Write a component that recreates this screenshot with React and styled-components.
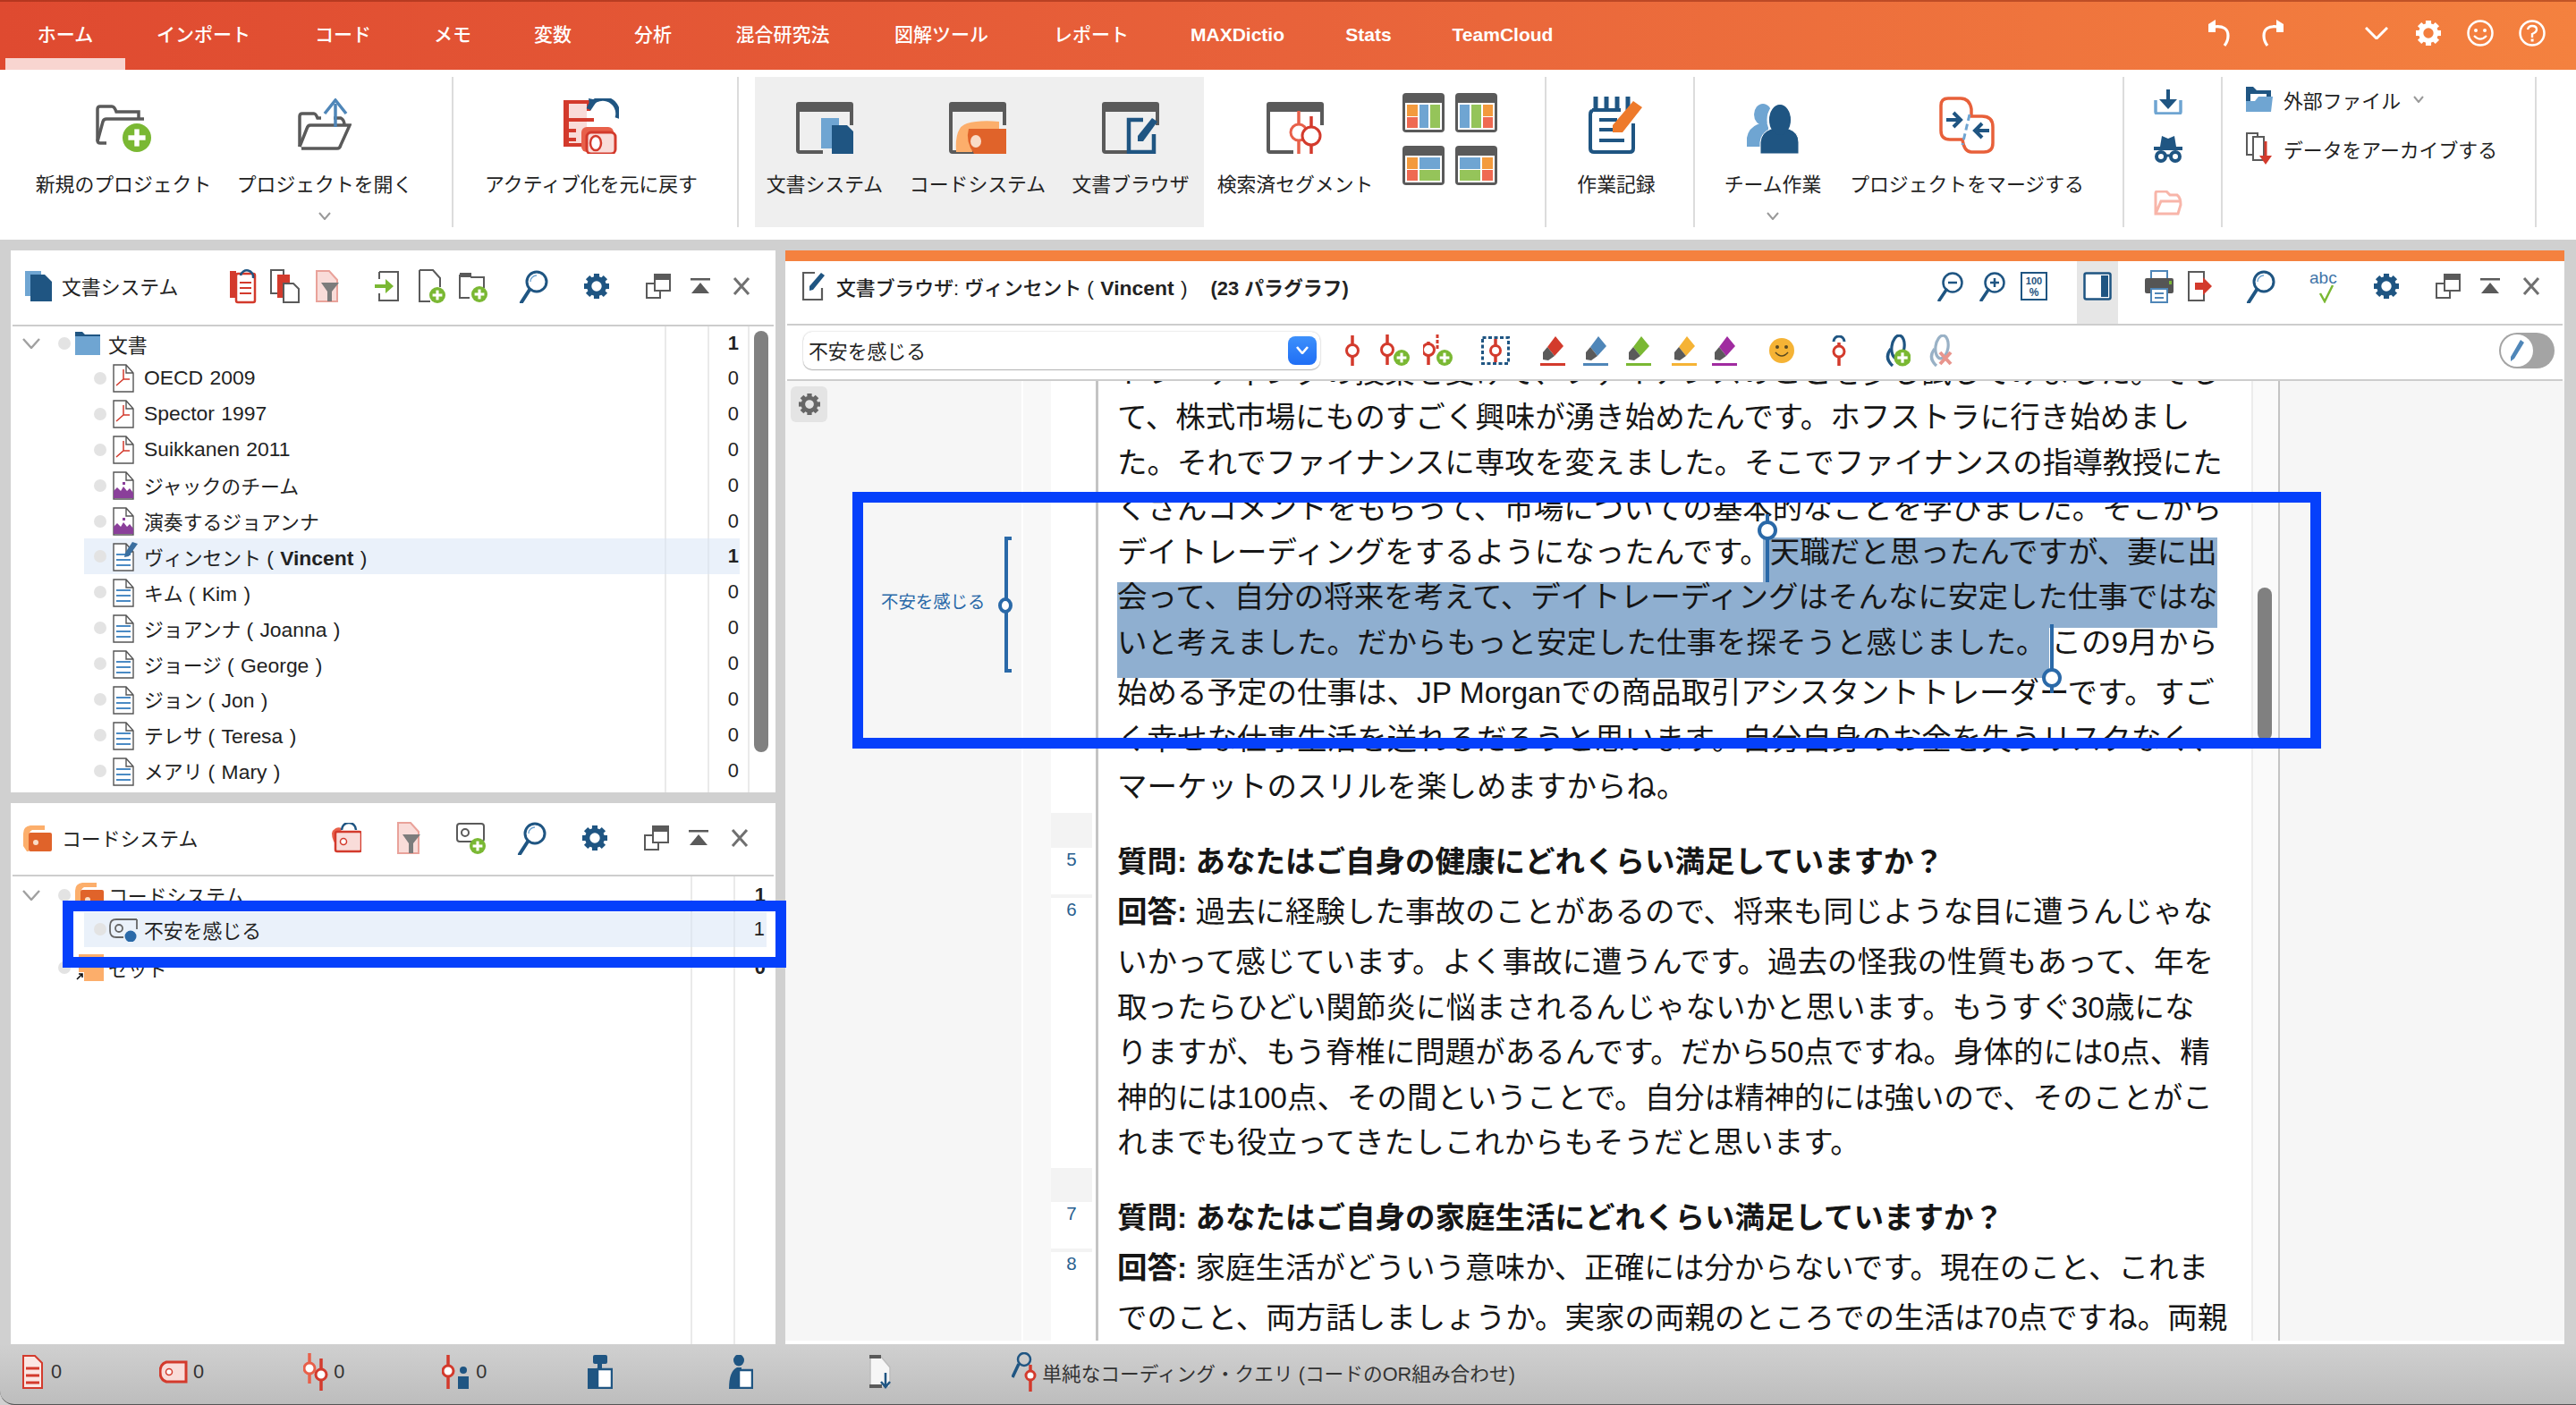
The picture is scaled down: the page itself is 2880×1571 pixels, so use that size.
import React from 'react';
import styled, { createGlobalStyle } from 'styled-components';

const G = '#5a5a5a', N = '#1f5582', LB = '#6fa5d2', R = '#d33a2c', PR = '#f9dcd9', O = '#e0632a', LO = '#fcae6b', GR = '#7ab833', MR = '#e8604a';
const FONT = '"Liberation Sans","Noto Sans CJK JP",sans-serif';

const Global = createGlobalStyle`
  html, body { margin: 0; padding: 0; background: #fff; }
  body { font-family: ${FONT}; color: #222; }
  * { box-sizing: border-box; }
`;

/* ---------- layout ---------- */
const Win = styled.div`position: relative; width: 2880px; height: 1571px; display: flex; flex-direction: column; overflow: hidden; background: #d0d0d0;`;
const TopBar = styled.div`height: 78px; display: flex; background: linear-gradient(90deg, #df4a30 0%, #e8623a 50%, #f4813f 100%); box-shadow: inset 0 2px 0 rgba(130,30,10,.45);`;
const Tabs = styled.div`display: flex; padding-left: 6px; flex: 1;`;
const Tab = styled.div`
  height: 78px; font-size: 21px; font-weight: ${p => (p.$latin ? 700 : 500)}; color: #fff; line-height: 78px; white-space: nowrap;
  box-shadow: ${p => (p.$on ? 'inset 0 -13px 0 #f8d5d0' : 'none')};
  width: ${p => p.$w}px; text-align: center; margin-right: ${p => p.$mr ?? 0}px;
`;
const BarIcons = styled.div`display: flex; align-items: flex-start; padding-top: 21px; padding-right: 33px;`;
const BarIcon = styled.div`width: 32px; height: 32px; margin-left: ${p => p.$ml}px; display: flex; justify-content: center; align-items: center;`;

const Ribbon = styled.div`height: 190px; background: #fff; display: flex; align-items: flex-start; padding: 8px 0 0 38px;`;
const Sep = styled.div`width: 2px; height: 168px; background: #dcdcdc; margin-left: ${p => p.$ml ?? 0}px; flex: none;`;
const ActiveGroup = styled.div`display: flex; width: 502px; height: 168px; background: #efefef; margin-left: 18px; flex: none;`;
const RItem = styled.div`width: ${p => p.$w}px; height: 168px; flex: none; display: flex; flex-direction: column; align-items: center;`;
const RIcon = styled.div`height: 64px; margin-top: ${p => (p.$up ? 20 : 22)}px; margin-bottom: ${p => (p.$up ? 2 : 0)}px; display: flex; align-items: flex-end; justify-content: center;`;
const RLabel = styled.div`font-size: 21.85px; line-height: 24px; margin-top: 23px; white-space: nowrap;`;
const RChev = styled.div`margin-top: 18px; line-height: 0;`;
const Grid = styled.div`display: grid; grid-template-columns: 47px 47px; gap: 15px 12px; margin: 18px 0 0 18px; width: 106px; flex: none;`;
const SmallCol = styled.div`width: 98px; height: 168px; flex: none; display: flex; flex-direction: column; align-items: center;`;
const SmallIcon = styled.div`margin-top: ${p => p.$mt}px; line-height: 0;`;
const LinkCol = styled.div`width: 349px; height: 168px; flex: none; padding: 11px 0 0 26px; display: flex; flex-direction: column; gap: 27px;`;
const LinkRow = styled.div`height: 28px; display: flex; align-items: center; font-size: 21.85px; white-space: nowrap;`;
const LinkIcon = styled.div`width: 42px; line-height: 0;`;
const LinkChev = styled.div`margin-left: 14px; line-height: 0;`;

const Main = styled.div`flex: 1; display: flex; padding: 12px 13px 0 12px; gap: 11px; min-height: 0;`;
const LeftCol = styled.div`width: 855px; display: flex; flex-direction: column; gap: 12px; flex: none;`;
const Panel = styled.div`background: #fff; display: flex; flex-direction: column; overflow: hidden; flex: ${p => p.$flex ?? 1}; min-height: 0; min-width: 0;`;
const PanelHead = styled.div`height: ${p => p.$h}px; flex: none; display: flex; align-items: center; padding-left: ${p => p.$pl}px; padding-bottom: ${p => p.$pb ?? 2}px; margin: 0 2px; border-bottom: 2px solid #cdcdcd;`;
const TitleBlock = styled.div`width: ${p => p.$w}px; flex: none; display: flex; align-items: center; font-size: 21.85px; white-space: nowrap;`;
const TitleIcon = styled.div`width: ${p => p.$w}px; flex: none; line-height: 0;`;
const Slot = styled.div`width: 46px; height: 44px; flex: none; margin-left: ${p => p.$ml ?? 0}px; display: flex; align-items: center; justify-content: center;`;

const Tree = styled.div`
  flex: 1; display: flex; min-height: 0; overflow: hidden;
  background:
    linear-gradient(#eaeaea,#eaeaea) no-repeat ${p => p.$l1}px 0 / 2px 100%,
    linear-gradient(#eaeaea,#eaeaea) no-repeat ${p => p.$l2}px 0 / 2px 100%
    ${p => (p.$l3 ? `, linear-gradient(#eaeaea,#eaeaea) no-repeat ${p.$l3}px 0 / 2px 100%` : '')};
`;
const Rows = styled.div`width: ${p => p.$w}px; flex: none; padding-top: ${p => p.$pt ?? 0}px;`;
const Row = styled.div`
  height: ${p => p.$h ?? 39.9}px; display: flex; align-items: center; font-size: 21.85px; white-space: nowrap;
  margin-left: ${p => (p.$root ? 0 : 82)}px; margin-top: ${p => p.$mt ?? 0}px;
  padding-left: ${p => (p.$root ? 13 : 11)}px;
  background: ${p => (p.$sel ? 'rgba(214,228,246,.5)' : 'transparent')};
`;
const Chev = styled.div`width: 20px; line-height: 0; margin-right: 20px;`;
const Dot = styled.div`width: 14px; height: 14px; border-radius: 50%; background: #e3e3e3; flex: none; margin-right: ${p => p.$mr}px;`;
const RowIcon = styled.div`width: ${p => p.$w}px; flex: none; line-height: 0;`;
const RowText = styled.div`flex: 1; b { font-weight: 700; }`;
const Lat = styled.span`font-size: 22.9px; word-spacing: 1px;`;
const Count = styled.div`font-size: 21.85px; font-weight: ${p => (p.$b ? 700 : 400)}; padding-right: ${p => p.$pr ?? 1}px;`;
const Thumb = styled.div`width: 16px; height: 471px; margin: 5px 0 0 16px; border-radius: 8px; background: #808080; flex: none;`;

const ActiveSlot = styled(Slot)`height: 70px; background: #e6e6e6; align-self: flex-start; padding-bottom: 14px;`;
const DocHeadWrap = styled(PanelHead)`padding-right: 12px;`;
const DocTitle = styled.div`font-size: 21.85px; font-weight: 500; white-space: nowrap; flex: 1; b { font-weight: 700; font-size: 22.9px; } i { font-style: normal; margin-left: 26px; font-weight: 700; }`;
const Strip = styled.div`height: 12px; background: #f4813f; flex: none;`;
const ToolRow = styled(PanelHead)`padding-right: 9px;`;
const Select = styled.div`width: 578px; height: 42px; flex: none; border-radius: 10px; background: #fff; box-shadow: 0 0 2px rgba(0,0,0,.25), 0 1px 1px rgba(0,0,0,.25); display: flex; align-items: center; justify-content: space-between; padding: 0 4px 0 6px; font-size: 21.85px;`;
const SelectBtn = styled.div`width: 32px; height: 32px; border-radius: 8px; background: linear-gradient(#3d90fb,#1f6ef5); display: flex; align-items: center; justify-content: center;`;
const TSlot = styled.div`width: 44px; height: 40px; flex: none; margin-left: ${p => p.$ml}px; display: flex; align-items: center; justify-content: center;`;
const Toggle = styled.div`width: 62px; height: 40px; margin-left: auto; border-radius: 20px; background: #a4a4a4; padding: 2px 0 2px 2px; flex: none;`;
const ToggleKnob = styled.div`width: 36px; height: 36px; border-radius: 50%; background: #fff; display: flex; align-items: center; justify-content: center;`;

const DocBody = styled.div`flex: 1; display: flex; min-height: 0; overflow: hidden; margin-bottom: 4px;`;
const CodeStrip = styled.div`position: relative; width: 264px; flex: none; background: #f6f6f6; padding: 6px;`;
const GearBtn = styled.div`width: 41px; height: 40px; border-radius: 6px; background: #e4e4e4; display: flex; align-items: center; justify-content: center;`;
const Bracket = styled.div`position: absolute; left: 245px; top: 174px; width: 8px; height: 152px; border: 4px solid #2a69a8; border-right: none;`;
const BracketDot = styled.div`position: absolute; left: 238px; top: 242px; width: 16px; height: 18px; border-radius: 50%; background: #fff; border: 4px solid #2a69a8;`;
const BracketLabel = styled.div`position: absolute; left: 107px; top: 235px; font-size: 19.4px; line-height: 24px; color: #2a69a8; white-space: nowrap;`;
const NarrowCol = styled.div`width: 31px; flex: none; margin-left: 2px; background: #f8f8f8;`;
const ParaCol = styled.div`width: 53px; flex: none; background: #fff; border-right: 3px solid #c4c4c4; padding-right: 4px; display: flex; flex-direction: column;`;
const ParaCell = styled.div`height: ${p => p.$h}px; flex: none; background: ${p => (p.$shade ? '#f3f3f3' : '#fff')}; color: #2a5f90; font-size: 20.5px; text-align: center; padding-top: 3px; line-height: 20px; font-family: "Liberation Sans",sans-serif;`;
const TextArea = styled.div`position: relative; width: 1289px; flex: none; padding-left: 21px; overflow: hidden; background: #fff;`;
const DocText = styled.div`margin-top: -26px; font-size: 33.5px; color: #161616;`;
const Line = styled.div`height: ${p => p.$h}px; line-height: 34px; white-space: nowrap; b { font-weight: 700; }`;
const Hl = styled.span`display: inline-block; height: ${p => p.$h}px; background: #8fafd0; vertical-align: top; padding-left: ${p => p.$pl ?? 0}px; margin-left: ${p => -(p.$pl ?? 0)}px; padding-right: ${p => p.$pr ?? 0}px; margin-right: ${p => p.$mr ?? 0}px;`;
const HandleLine = styled.div`position: absolute; left: ${p => p.$x}px; top: ${p => p.$y}px; width: 4px; height: ${p => p.$h}px; background: #2a69a8;`;
const HandleDot = styled.div`position: absolute; left: ${p => p.$x}px; top: ${p => p.$y}px; width: 22px; height: 22px; border-radius: 50%; background: #fff; border: 4px solid #2a69a8;`;
const ScrollCol = styled.div`width: 30px; flex: none; background: #fafafa; border-left: 2px solid #ececec; padding: 231px 0 0 5px;`;
const DocThumb = styled.div`width: 16px; height: 171px; border-radius: 8px; background: #808080;`;
const RightMargin = styled.div`flex: 1; background: #f6f6f6; border-left: 2px solid #c4c4c4;`;

const Status = styled.div`height: 68px; flex: none; display: flex; align-items: center; padding: 0 0 5px 25px; background: linear-gradient(#d0d0d0,#bdbdbd); border-bottom-left-radius: 16px; border-bottom: 1px solid #555; font-size: 21.7px; color: #333;`;
const StatusIcon = styled.div`margin-left: ${p => p.$ml ?? 0}px; line-height: 0; flex: none;`;
const StatusNum = styled.div`margin-left: ${p => p.$ml}px;`;
const StatusText = styled.div`margin-left: 5px; white-space: nowrap;`;
const Callout = styled.div`position: absolute; left: ${p => p.$x}px; top: ${p => p.$y}px; width: ${p => p.$w}px; height: ${p => p.$h}px; border: 12px solid #0540fb; pointer-events: none;`;

/* ---------- icon primitives ---------- */
const Plus = ({ cx, cy, r }) => (
  <g>
    <circle cx={cx} cy={cy} r={r} fill={GR} />
    <rect x={cx - r * 0.6} y={cy - r * 0.17} width={r * 1.2} height={r * 0.34} fill="#fff" />
    <rect x={cx - r * 0.17} y={cy - r * 0.6} width={r * 0.34} height={r * 1.2} fill="#fff" />
  </g>
);
const Ico = ({ w, h, children, vb }) => <svg width={w} height={h} viewBox={vb || `0 0 ${w} ${h}`} fill="none">{children}</svg>;

const Chevron = ({ w = 14, h = 9, c = '#999', s = 2 }) => (
  <Ico w={w} h={h}><path d={`M1 1 L${w / 2} ${h - 1} L${w - 1} 1`} stroke={c} strokeWidth={s} /></Ico>
);
const GearIcon = ({ size = 28, c = N }) => (
  <svg width={size} height={size} viewBox="0 0 32 32">
    {[0, 45, 90, 135, 180, 225, 270, 315].map(a => <rect key={a} x="12.5" y="0" width="7" height="7" fill={c} transform={`rotate(${a} 16 16)`} />)}
    <circle cx="16" cy="16" r="9.5" fill="none" stroke={c} strokeWidth="6" />
  </svg>
);
const Magnifier = () => (
  <Ico w={34} h={38}>
    <circle cx="20" cy="14" r="11" stroke={N} strokeWidth="3" />
    <path d="M12 23 L3 37" stroke={N} strokeWidth="4" strokeLinecap="round" />
    <path d="M13 14 a7 7 0 0 1 7 -7" stroke={LB} strokeWidth="1.5" />
  </Ico>
);
const WindowIcon = () => (
  <Ico w={28} h={28}>
    <rect x="1" y="11" width="15" height="16" stroke={G} strokeWidth="2" fill="#fff" />
    <rect x="10" y="1" width="17" height="18" stroke={G} strokeWidth="2" fill="#fff" />
    <rect x="10" y="1" width="17" height="6" fill={G} />
  </Ico>
);
const UpIcon = () => (
  <Ico w={22} h={18}>
    <rect x="0" y="0" width="22" height="2.5" fill={G} />
    <polygon points="11,5 21,17 1,17" fill={G} />
  </Ico>
);
const XIcon = () => <Ico w={20} h={20}><path d="M2 1 L18 19 M18 1 L2 19" stroke="#707070" strokeWidth="3" /></Ico>;
const WinTools = () => (
  <>
    <Slot $ml={23}><WindowIcon /></Slot>
    <Slot $ml={1}><UpIcon /></Slot>
    <Slot><XIcon /></Slot>
  </>
);
const FunnelDoc = () => (
  <Ico w={26} h={36}>
    <path d="M1 1 H15 L24 11 V35 H1 Z" fill={PR} stroke="#e9a29a" strokeWidth="2" />
    <path d="M6 14 H26 L18 24 V35 H13 V24 Z" fill="#7c7c7c" />
  </Ico>
);
const RedDoc = () => (
  <Ico w={30} h={40}>
    <rect x="0" y="3" width="7" height="30" fill={R} />
    <rect x="7" y="6" width="21" height="32" fill="#fff" stroke={R} strokeWidth="2.5" rx="2" />
    <path d="M11 16 H24 M11 22 H24 M11 28 H24" stroke={R} strokeWidth="2" />
    <path d="M12 8 a7 7 0 0 1 14 3" stroke={N} strokeWidth="2.5" />
  </Ico>
);
const CopyDocs = () => (
  <Ico w={34} h={38}>
    <rect x="1" y="1" width="14" height="26" fill="#fff" stroke={G} strokeWidth="2" />
    <rect x="8" y="6" width="14" height="26" fill={R} />
    <path d="M15 16 H26 L32 22 V37 H15 Z" fill="#fff" stroke={G} strokeWidth="2" />
  </Ico>
);
const ImportDoc = () => (
  <Ico w={28} h={34}>
    <path d="M5 1 H26 V33 H5 V25 M5 9 V1" stroke={G} strokeWidth="2" />
    <path d="M0 15 H12 V9 L21 17 L12 25 V19 H0 Z" fill={GR} />
  </Ico>
);
const NewDoc = () => (
  <Ico w={30} h={38}>
    <path d="M1 1 H16 L24 10 V20 M1 1 V36 H13" stroke={G} strokeWidth="2" />
    <Plus cx={21} cy={29} r={9} />
  </Ico>
);
const NewFolder = () => (
  <Ico w={32} h={36}>
    <path d="M1 5 H12 L14 8 H28 V20 M1 5 V31 H12" stroke={G} strokeWidth="2" />
    <rect x="1" y="3" width="13" height="5" fill={G} />
    <Plus cx={23} cy={27} r={9} />
  </Ico>
);
const Tag = ({ c = R, fill = PR, dot = true }) => (
  <g>
    <rect x="1" y="1" width="29" height="22" rx="2" fill={fill} stroke={c} strokeWidth="2.5" />
    {dot && <circle cx="10" cy="12" r="3.5" fill="#fff" stroke={c} strokeWidth="1.5" />}
  </g>
);
const UndoTag = () => (
  <Ico w={34} h={34}>
    <path d="M1 12 a8 8 0 0 1 11 -6 L8 28 Q1 20 1 12 Z" fill={MR} />
    <g transform="translate(4 9)"><Tag /></g>
    <path d="M12 8 a8 8 0 0 1 16 0" stroke={N} strokeWidth="2.5" />
  </Ico>
);
const NewTag = () => (
  <Ico w={34} h={36}>
    <rect x="1" y="2" width="30" height="20" rx="3" stroke={G} strokeWidth="2" fill="#fff" />
    <circle cx="10" cy="12" r="4" stroke={G} strokeWidth="2" />
    <Plus cx={24} cy={27} r={9} />
  </Ico>
);
const SegG = ({ x, y0 = 0, y1 = 34, cy = 17, c = R, r = 6.5, dash }) => (
  <g>
    <path d={`M${x} ${y0} V${y1}`} stroke={c} strokeWidth="3.5" strokeDasharray={dash} />
    <circle cx={x} cy={cy} r={r} fill="#fff" stroke={c} strokeWidth="3" />
  </g>
);
const Marker = ({ c }) => (
  <Ico w={30} h={34}>
    <polygon points="18,1 27,12 17,23 9,13" fill={c} />
    <polygon points="9,13 17,23 10,28 4,27 4,19" fill={G} />
    <rect x="1" y="31" width="28" height="3" fill={c} />
  </Ico>
);
const LinkIco = ({ faded }) => (
  <Ico w={30} h={36}>
    <g opacity={faded ? 0.45 : 1}>
      <ellipse cx="16" cy="14" rx="7" ry="13" stroke={N} strokeWidth="3.2" transform="rotate(8 16 14)" />
      <path d="M8 16 Q0 26 10 35" stroke={N} strokeWidth="3.4" />
    </g>
    {faded
      ? <path d="M14 20 L26 33 M26 20 L14 33" stroke="#e8958d" strokeWidth="4" />
      : <Plus cx={21} cy={26} r={9.5} />}
  </Ico>
);

/* big ribbon icons */
const Frame = ({ children }) => (
  <Ico w={64} h={58}>
    <path d="M2 4 V54 Q2 56 4 56 H30" stroke={G} strokeWidth="4" />
    <path d="M62 4 V26" stroke={G} strokeWidth="4" />
    <rect x="0" y="0" width="64" height="11" rx="3" fill={G} />
    {children}
  </Ico>
);
const BigDocSys = () => (
  <Frame>
    <rect x="28" y="18" width="20" height="34" fill={LB} />
    <path d="M40 26 H57 L64 33 V58 H40 Z" fill={N} />
  </Frame>
);
const BigCodeSys = () => (
  <Frame>
    <path d="M8 56 Q6 28 20 24 Q34 20 56 22 V30 H32 Q24 36 26 56 Z" fill={LO} />
    <path d="M22 30 H64 V58 H28 Q18 44 22 30 Z" fill={O} />
    <ellipse cx="30" cy="44" rx="6" ry="7" fill="#f9dcc8" />
  </Frame>
);
const BigBrowser = () => (
  <Frame>
    <path d="M46 20 H30 V56 H58 V36" stroke={N} strokeWidth="4.5" fill="#efefef" />
    <polygon points="56,18 62,22 46,44 40,44 40,38" fill={N} />
  </Frame>
);
const BigSeg = () => (
  <Frame>
    <rect x="30" y="30" width="34" height="28" fill="#fff" />
    <SegG x={36} y0={10} y1={58} cy={34} c={MR} r={9} />
    <SegG x={50} y0={16} y1={60} cy={38} c={R} r={10} />
  </Frame>
);
const BigGrid = ({ cells }) => (
  <Ico w={47} h={44}>
    <rect x="0" y="0" width="47" height="44" rx="4" fill={G} />
    <rect x="3" y="11" width="41" height="30" fill="#fff" />
    {cells.map(([x, y, w, h, c], i) => <rect key={i} x={x} y={y} width={w} height={h} fill={c} />)}
  </Ico>
);
const OR = '#f39a3d', BL = '#6fa5d2', GN = '#95c45a', RD = '#ef6a52';
const gridA = [[5, 13, 12, 13, OR], [5, 27, 12, 12, RD], [19, 13, 10, 26, BL], [31, 13, 11, 26, GN]];
const gridB = [[5, 13, 11, 26, BL], [18, 13, 11, 26, GN], [31, 13, 11, 13, OR], [31, 27, 11, 12, RD]];
const gridC = [[5, 13, 12, 13, OR], [5, 27, 12, 12, RD], [19, 13, 23, 13, BL], [19, 27, 23, 12, GN]];
const gridD = [[5, 13, 23, 13, BL], [5, 27, 23, 12, GN], [30, 13, 12, 13, OR], [30, 27, 12, 12, RD]];

const NewProject = () => (
  <Ico w={62} h={54}>
    <path d="M12 44 H5 Q2 44 2 41 V6 Q2 3 5 3 H18 Q21 3 23 9 H48 V16" stroke={G} strokeWidth="3.5" />
    <path d="M2 42 L8 20 Q9 17 12 17 H54" stroke={G} strokeWidth="3.5" />
    <Plus cx={46} cy={38} r={16} />
  </Ico>
);
const OpenProject = () => (
  <Ico w={60} h={60}>
    <path d="M2 54 V20 Q2 17 5 17 H18 Q20 17 22 22 H26 M40 22 H48 Q52 24 52 30" stroke={G} strokeWidth="3.5" />
    <path d="M4 56 H44 Q47 56 48 52 L58 30 H14 Q11 30 10 34 L2 54" stroke={G} strokeWidth="3.5" />
    <path d="M42 32 V6" stroke="#4f86b8" strokeWidth="3.5" />
    <path d="M30 17 L42 2 L54 17" stroke="#4f86b8" strokeWidth="3.5" />
  </Ico>
);
const Restore = () => (
  <Ico w={62} h={62}>
    <path d="M2 4 H28 V14 M2 4 V52 H24" stroke={R} strokeWidth="4" fill={PR} />
    <rect x="4" y="6" width="22" height="44" fill={PR} />
    <rect x="0" y="2" width="6" height="50" fill={R} />
    <path d="M6 24 H34 M6 36 H14 M6 46 H14" stroke={R} strokeWidth="4" />
    <path d="M28 12 a14 14 0 0 1 32 10" stroke={N} strokeWidth="5" />
    <polygon points="28,0 38,2 30,14" fill={N} />
    <rect x="20" y="32" width="36" height="28" rx="6" fill="#e8604a" />
    <rect x="26" y="38" width="32" height="24" rx="5" fill={PR} stroke={R} strokeWidth="3" />
    <ellipse cx="36" cy="50" rx="6" ry="8" fill="#fff" stroke={R} strokeWidth="2.5" />
  </Ico>
);
const WorkLog = () => (
  <Ico w={62} h={64}>
    <path d="M5 16 Q2 16 2 20 V58 Q2 62 6 62 H46 Q50 62 50 58 V30" stroke={N} strokeWidth="4" />
    <path d="M4 15 H36" stroke={N} strokeWidth="4" />
    <path d="M8 0 V15 M20 0 V15 M32 0 V15 M44 0 V15" stroke={N} strokeWidth="5" />
    <path d="M12 26 H32 M12 37 H32 M12 49 H40" stroke={N} strokeWidth="4" />
    <polygon points="50,5 60,12 38,40 27,40 27,32" fill="#ee7a2b" />
  </Ico>
);
const Team = () => (
  <Ico w={58} h={56}>
    <ellipse cx="18" cy="12" rx="10" ry="12" fill={LB} />
    <path d="M0 48 V38 Q2 27 12 23 H24 V48 Z" fill={LB} />
    <ellipse cx="37" cy="18" rx="13" ry="18" fill={N} stroke="#fff" strokeWidth="3" />
    <path d="M15 56 V43 Q16 32 27 28 H47 Q58 32 58 43 V56 Z" fill={N} stroke="#fff" strokeWidth="1" />
    <ellipse cx="37" cy="18" rx="12" ry="17" fill={N} />
  </Ico>
);
const Merge = () => (
  <Ico w={62} h={64}>
    <path d="M10 2 H24 Q34 2 36 14 V22 H48 Q60 22 60 34 V52 Q60 62 50 62 H36 Q28 62 26 48 H12 Q2 48 2 38 V10 Q2 2 10 2 Z" stroke="#e8603a" strokeWidth="3.5" fill="#fff" />
    <path d="M8 26 H22 M16 18 L24 26 L16 34" stroke={N} strokeWidth="4" />
    <path d="M56 38 H42 M48 30 L40 38 L48 46" stroke={N} strokeWidth="4" />
    <path d="M34 20 L26 54" stroke={LB} strokeWidth="3" strokeDasharray="7 4" />
  </Ico>
);
const DownloadTray = () => (
  <Ico w={32} h={28}>
    <path d="M2 12 V25 Q2 27 4 27 H28 Q30 27 30 25 V12" stroke={LB} strokeWidth="3.5" />
    <path d="M16 0 V18" stroke={N} strokeWidth="4" />
    <polygon points="6,11 26,11 16,22" fill={N} />
  </Ico>
);
const Spy = () => (
  <Ico w={32} h={30}>
    <polygon points="9,0 16,3 23,0 25,12 7,12" fill={N} />
    <rect x="0" y="12" width="32" height="4" fill={N} />
    <circle cx="8" cy="23" r="5" stroke={N} strokeWidth="4" />
    <circle cx="24" cy="23" r="5" stroke={N} strokeWidth="4" />
    <path d="M13 22 H19" stroke={N} strokeWidth="3" />
  </Ico>
);
const PaleFolder = () => (
  <Ico w={32} h={28}>
    <path d="M2 26 V3 Q2 1 4 1 H14 L18 5 H26 Q30 8 30 16 L27 26 Z M2 26 L8 12 H30" stroke="#f8b5a9" strokeWidth="3" />
  </Ico>
);
const ExtFolder = () => (
  <Ico w={30} h={28}>
    <path d="M0 0 H8 L12 4 H28 V28 H0 Z" fill={N} />
    <rect x="5" y="8" width="18" height="10" fill="#fff" />
    <path d="M0 16 H10 L14 11 H30 L28 28 H0 Z" fill={LB} />
  </Ico>
);
const Archive = () => (
  <Ico w={30} h={36}>
    <rect x="1" y="1" width="12" height="24" stroke={G} strokeWidth="2" fill="#fff" />
    <rect x="8" y="5" width="12" height="26" stroke={G} strokeWidth="2" fill="#fff" />
    <path d="M22 10 V28" stroke={R} strokeWidth="3" />
    <polygon points="15,26 29,26 22,36" fill={R} />
  </Ico>
);

/* tree icons */
const DocShape = () => <path d="M1 1 H15 L23 10 V31 H1 Z M15 1 V10 H23" stroke="#555" strokeWidth="1.4" fill="#fff" />;
const PdfDoc = () => (
  <Ico w={24} h={32}>
    <DocShape />
    <path d="M12 6 V17 M4 24 L12 17 H19" stroke={R} strokeWidth="1.5" />
  </Ico>
);
const ImgDoc = () => (
  <Ico w={24} h={32}>
    <DocShape />
    <path d="M1 30 V22 L5 18 L9 22 L12 17 L16 22 L19 19 L23 24 V30 Z" fill="#8a3f9a" />
    <rect x="11" y="12" width="3" height="3" fill="#8a3f9a" />
  </Ico>
);
const TxtDoc = ({ pen }) => (
  <Ico w={30} h={34}>
    <g transform="translate(0 2)"><DocShape /></g>
    <path d="M4 15 H20 M4 21 H20 M4 27 H20" stroke="#4a8ac4" strokeWidth="1.8" />
    {pen && <polygon points="22,1 28,3 18,17 13,18 14,13" fill="#3b6f9f" />}
  </Ico>
);
const TreeFolder = () => (
  <Ico w={28} h={26}>
    <path d="M0 0 H8 L11 3 H28 V6 H0 Z" fill={N} />
    <rect x="0" y="5" width="28" height="21" fill={LB} />
  </Ico>
);
const CodeSysIcon = () => (
  <Ico w={32} h={30}>
    <path d="M0 24 V10 Q0 2 8 1 H24 V6 H10 Q6 8 6 14 V30 H4 Z" fill={LO} />
    <rect x="6" y="9" width="26" height="21" rx="2" fill={O} />
    <circle cx="14" cy="20" r="3" fill="#f9dcc8" />
  </Ico>
);
const CodeBlueDot = () => (
  <Ico w={32} h={28}>
    <path d="M26 3 H8 Q1 3 1 10 V16 Q1 23 8 23 H16 M31 3 V14 M26 3 H31" stroke="#666" strokeWidth="1.8" />
    <circle cx="11" cy="13" r="4" stroke="#666" strokeWidth="1.8" />
    <circle cx="24" cy="22" r="6.5" fill="#2a69a8" />
  </Ico>
);
const SetIcon = () => (
  <Ico w={32} h={30}>
    <rect x="4" y="0" width="28" height="30" fill={LO} />
    <rect x="0" y="20" width="10" height="10" fill="#fff" />
    <path d="M2 28 L8 22 M4 22 H8 V26" stroke="#111" strokeWidth="1.6" />
  </Ico>
);

/* top bar */
const Undo = ({ flip }) => (
  <svg width="28" height="30" viewBox="0 0 28 30" fill="none" style={flip ? { transform: 'scaleX(-1)' } : undefined}>
    <polygon points="2,5 10,0 10,14 2,14" fill="#fff" />
    <path d="M8 8 Q24 6 24 18 Q24 24 20 29" stroke="#fff" strokeWidth="3.2" />
  </svg>
);
const Smile = () => (
  <Ico w={30} h={30}>
    <circle cx="15" cy="15" r="13.5" stroke="#fff" strokeWidth="2.5" />
    <circle cx="10" cy="12" r="2" fill="#fff" /><circle cx="20" cy="12" r="2" fill="#fff" />
    <path d="M8 18 Q15 25 22 18" stroke="#fff" strokeWidth="2.2" />
  </Ico>
);
const Help = () => (
  <Ico w={30} h={30}>
    <circle cx="15" cy="15" r="13.5" stroke="#fff" strokeWidth="2.5" />
    <path d="M10 11 Q11 7 15 7 Q20 7 20 11 Q20 14 15 16 V20" stroke="#fff" strokeWidth="2.4" />
    <rect x="13.6" y="21.5" width="3" height="3" fill="#fff" />
  </Ico>
);

/* doc tools */
const DocPen = () => (
  <Ico w={26} h={32}>
    <path d="M14 1 H1 V31 H22 V18" stroke={G} strokeWidth="2.2" />
    <polygon points="21,1 25,4 12,20 8,21 8,16" fill={N} />
  </Ico>
);
const ZoomIco = ({ sign }) => (
  <Ico w={30} h={34}>
    <circle cx="17" cy="13" r="10.5" stroke={N} strokeWidth="2.5" />
    <path d="M10 21 L2 33" stroke={N} strokeWidth="3.5" strokeLinecap="round" />
    <path d="M12 13 H22" stroke={N} strokeWidth="2.5" />
    {sign === '+' && <path d="M17 8 V18" stroke={N} strokeWidth="2.5" />}
  </Ico>
);
const Zoom100 = () => (
  <Ico w={30} h={32}>
    <rect x="1" y="1" width="28" height="30" stroke={N} strokeWidth="2" />
    <text x="15" y="14" textAnchor="middle" fontFamily='"Liberation Sans",sans-serif' fontSize="11" fontWeight="700" fill={N}>100</text>
    <text x="15" y="27" textAnchor="middle" fontFamily='"Liberation Sans",sans-serif' fontSize="12" fontWeight="700" fill={N}>%</text>
  </Ico>
);
const PanelView = () => (
  <Ico w={32} h={32}>
    <rect x="1.5" y="1.5" width="29" height="29" rx="2" stroke={N} strokeWidth="2.5" fill="#fff" />
    <rect x="20" y="4" width="8" height="24" fill={N} />
  </Ico>
);
const Printer = () => (
  <Ico w={32} h={38}>
    <path d="M7 2 H25 V14 H7 Z" stroke="#4f86b8" strokeWidth="2" />
    <rect x="0" y="10" width="32" height="17" rx="2" fill="#555" />
    <rect x="27" y="13" width="3" height="4" fill={GR} />
    <path d="M7 22 H25 V37 H7 Z" fill="#fff" stroke="#4f86b8" strokeWidth="2" />
    <path d="M11 27 H21 M11 32 H21" stroke="#4f86b8" strokeWidth="2" />
  </Ico>
);
const ExportDoc = () => (
  <Ico w={28} h={34}>
    <path d="M18 9 V1 H1 V33 H18 V25" stroke={G} strokeWidth="2" />
    <path d="M8 13 H17 V7 L27 17 L17 27 V21 H8 Z" fill={R} />
  </Ico>
);
const Abc = () => (
  <Ico w={34} h={38}>
    <text x="1" y="16" fontFamily='"Liberation Sans",sans-serif' fontSize="19" fill="#3f75a8">abc</text>
    <path d="M13 27 L18 36 L27 18" stroke={GR} strokeWidth="2.5" />
  </Ico>
);

/* status icons */
const StDoc = () => (
  <Ico w={23} h={38}>
    <path d="M1 1 H14 L22 9 V37 H1 Z" fill="#fbe6e3" stroke={R} strokeWidth="2" />
    <path d="M4 15 H19 M4 23 H19 M4 31 H19" stroke={R} strokeWidth="3" />
  </Ico>
);
const StTag = () => (
  <Ico w={32} h={26}>
    <path d="M30 2 H8 Q1 4 1 13 Q1 22 8 24 H30 Z" fill={PR} stroke={R} strokeWidth="3" />
    <circle cx="11" cy="13" r="3.5" fill="#fff" stroke={R} strokeWidth="1.5" />
  </Ico>
);
const StSegs = () => (
  <Ico w={28} h={42}>
    <SegG x={7} y0={0} y1={34} cy={17} c={MR} r={6} />
    <SegG x={20} y0={6} y1={42} cy={24} c={R} r={6} />
  </Ico>
);
const StSegDoc = () => (
  <Ico w={32} h={38}>
    <SegG x={7} y0={0} y1={38} cy={18} c={R} r={6} />
    <circle cx="24" cy="17" r="4" fill={N} />
    <path d="M18 38 V24 H30 V38 Z" fill={N} />
  </Ico>
);
const StDocSet = () => (
  <Ico w={28} h={38}>
    <rect x="6" y="0" width="16" height="10" rx="2" fill={N} />
    <rect x="11" y="10" width="5" height="6" fill={N} />
    <rect x="0" y="15" width="10" height="23" fill={N} />
    <rect x="11" y="16" width="16" height="21" stroke={N} strokeWidth="2.5" fill="#fff" />
  </Ico>
);
const StPerson = () => (
  <Ico w={27} h={38}>
    <ellipse cx="11" cy="6" rx="6" ry="6.5" fill={N} />
    <path d="M0 38 Q0 18 9 14 H14 V38 Z" fill={N} />
    <rect x="11" y="17" width="15" height="20" stroke={N} strokeWidth="2.5" fill="#fff" />
  </Ico>
);
const StImport = () => (
  <Ico w={25} h={38}>
    <path d="M1 2 H13 L23 14 V36 H1 Z" fill="#f6f6f6" stroke="#bdbdbd" strokeWidth="1.5" />
    <rect x="0" y="0" width="13" height="4" fill={G} /><rect x="0" y="33" width="14" height="4" fill={G} />
    <path d="M18 20 V34 M13 30 L18 36 L23 30" stroke={N} strokeWidth="2.5" />
  </Ico>
);
const StQuery = () => (
  <Ico w={29} h={44}>
    <circle cx="14" cy="8" r="7" stroke={N} strokeWidth="2.5" />
    <path d="M8 13 L1 28" stroke={N} strokeWidth="3.5" />
    <SegG x={21} y0={14} y1={44} cy={26} c={R} r={5} />
  </Ico>
);

/* ---------- data ---------- */
const tabs = [
  ['ホーム', 134, true, 35], ['インポート', 105, false, 72], ['コード', 63, false, 70], ['メモ', 41, false, 70], ['変数', 44, false, 68],
  ['分析', 44, false, 68], ['混合研究法', 110, false, 68], ['図解ツール', 109, false, 71], ['レポート', 83, false, 67], ['MAXDictio', 111, false, 64, true],
  ['Stats', 54, false, 64, true], ['TeamCloud', 118, false, 0, true],
];
const docs = [
  [PdfDoc, <Lat>OECD 2009</Lat>], [PdfDoc, <Lat>Spector 1997</Lat>], [PdfDoc, <Lat>Suikkanen 2011</Lat>], [ImgDoc, 'ジャックのチーム'], [ImgDoc, '演奏するジョアンナ'],
  [TxtDoc, <>ヴィンセント <Lat>( <b>Vincent</b> )</Lat></>, 1, true], [TxtDoc, <>キム <Lat>( Kim )</Lat></>], [TxtDoc, <>ジョアンナ <Lat>( Joanna )</Lat></>], [TxtDoc, <>ジョージ <Lat>( George )</Lat></>],
  [TxtDoc, <>ジョン <Lat>( Jon )</Lat></>], [TxtDoc, <>テレサ <Lat>( Teresa )</Lat></>], [TxtDoc, <>メアリ <Lat>( Mary )</Lat></>],
];
const before = [
  [50, 'トレーディングの授業を受けて、ファイナンスのことを少し試してみました。そし'],
  [51, 'て、株式市場にものすごく興味が湧き始めたんです。ホフストラに行き始めまし'],
  [51, 'た。それでファイナンスに専攻を変えました。そこでファイナンスの指導教授にた'],
  [49, 'くさんコメントをもらって、市場についての基本的なことを学びました。そこから'],
];
const after = [
  [52, '始める予定の仕事は、JP Morganでの商品取引アシスタントトレーダーです。すご'],
  [53, 'く幸せな仕事生活を送れるだろうと思います。自分自身のお金を失うリスクなく、'],
  [84, 'マーケットのスリルを楽しめますからね。'],
  [56, <b>質問: あなたはご自身の健康にどれくらい満足していますか？</b>],
  [56, <><b>回答:</b> 過去に経験した事故のことがあるので、将来も同じような目に遭うんじゃな</>],
  [51, 'いかって感じています。よく事故に遭うんです。過去の怪我の性質もあって、年を'],
  [50, '取ったらひどい関節炎に悩まされるんじゃないかと思います。もうすぐ30歳にな'],
  [51, 'りますが、もう脊椎に問題があるんです。だから50点ですね。身体的には0点、精'],
  [50, '神的には100点、その間ということで。自分は精神的には強いので、そのことがこ'],
  [84, 'れまでも役立ってきたしこれからもそうだと思います。'],
  [56, <b>質問: あなたはご自身の家庭生活にどれくらい満足していますか？</b>],
  [56, <><b>回答:</b> 家庭生活がどういう意味か、正確には分からないです。現在のこと、これま</>],
  [56, 'でのこと、両方話しましょうか。実家の両親のところでの生活は70点ですね。両親'],
];

const RibbonItem = ({ w, icon, label, chev, up }) => (
  <RItem $w={w}>
    <RIcon $up={up}>{icon}</RIcon>
    <RLabel>{label}</RLabel>
    {chev && <RChev><Chevron /></RChev>}
  </RItem>
);

export default function App() {
  return (
    <Win>
      <Global />
      <TopBar>
        <Tabs>
          {tabs.map(([t, w, on, mr, latin]) => (
            <Tab key={t} $w={w} $on={on} $mr={mr} $latin={latin}>{t}</Tab>
          ))}
        </Tabs>
        <BarIcons>
          <BarIcon><Undo /></BarIcon>
          <BarIcon $ml={28}><Undo flip /></BarIcon>
          <BarIcon $ml={84}><Chevron w={26} h={14} c="#fff" s={3} /></BarIcon>
          <BarIcon $ml={26}><GearIcon size={28} c="#fff" /></BarIcon>
          <BarIcon $ml={26}><Smile /></BarIcon>
          <BarIcon $ml={26}><Help /></BarIcon>
        </BarIcons>
      </TopBar>

      <Ribbon>
        <RibbonItem w={200} up icon={<NewProject />} label="新規のプロジェクト" />
        <RibbonItem w={250} up icon={<OpenProject />} label="プロジェクトを開く" chev />
        <Sep $ml={17} />
        <RibbonItem w={308} icon={<Restore />} label="アクティブ化を元に戻す" />
        <Sep $ml={9} />
        <ActiveGroup>
          <RibbonItem w={156} icon={<BigDocSys />} label="文書システム" />
          <RibbonItem w={186} icon={<BigCodeSys />} label="コードシステム" />
          <RibbonItem w={156} icon={<BigBrowser />} label="文書ブラウザ" />
        </ActiveGroup>
        <RibbonItem w={204} icon={<BigSeg />} label="検索済セグメント" />
        <Grid>
          <BigGrid cells={gridA} /><BigGrid cells={gridB} />
          <BigGrid cells={gridC} /><BigGrid cells={gridD} />
        </Grid>
        <Sep $ml={53} />
        <RibbonItem w={156} icon={<WorkLog />} label="作業記録" />
        <Sep $ml={8} />
        <RibbonItem w={174} icon={<Team />} label="チーム作業" chev />
        <RibbonItem w={260} icon={<Merge />} label="プロジェクトをマージする" />
        <Sep $ml={44} />
        <SmallCol>
          <SmallIcon $mt={14}><DownloadTray /></SmallIcon>
          <SmallIcon $mt={24}><Spy /></SmallIcon>
          <SmallIcon $mt={31}><PaleFolder /></SmallIcon>
        </SmallCol>
        <Sep $ml={10} />
        <LinkCol>
          <LinkRow><LinkIcon><ExtFolder /></LinkIcon>外部ファイル<LinkChev><Chevron w={12} h={8} /></LinkChev></LinkRow>
          <LinkRow><LinkIcon><Archive /></LinkIcon>データをアーカイブする</LinkRow>
        </LinkCol>
        <Sep />
      </Ribbon>

      <Main>
        <LeftCol>
          <Panel>
            <PanelHead $h={85} $pl={14} $pb={4}>
              <TitleBlock $w={221}>
                <TitleIcon $w={41}>
                  <Ico w={30} h={34}><rect x="0" y="0" width="18" height="28" fill={LB} /><path d="M6 4 H22 L30 12 V34 H6 Z" fill={N} /></Ico>
                </TitleIcon>
                文書システム
              </TitleBlock>
              <Slot><RedDoc /></Slot>
              <Slot $ml={1}><CopyDocs /></Slot>
              <Slot $ml={1}><FunnelDoc /></Slot>
              <Slot $ml={21}><ImportDoc /></Slot>
              <Slot $ml={4}><NewDoc /></Slot>
              <Slot $ml={0}><NewFolder /></Slot>
              <Slot $ml={22}><Magnifier /></Slot>
              <Slot $ml={24}><GearIcon /></Slot>
              <WinTools />
            </PanelHead>
            <Tree $l1={731} $l2={779} $l3={824}>
              <Rows $w={815}>
                <Row $root $h={38}>
                  <Chev><Chevron w={20} h={12} c="#a0a0a0" s={2.4} /></Chev>
                  <Dot $mr={5} />
                  <RowIcon $w={37}><TreeFolder /></RowIcon>
                  <RowText>文書</RowText>
                  <Count $b $pr={1}>1</Count>
                </Row>
                {docs.map(([I, t, n, sel], i) => (
                  <Row key={i} $sel={sel}>
                    <Dot $mr={7} />
                    <RowIcon $w={35}>{I === TxtDoc ? <TxtDoc pen={sel} /> : <I />}</RowIcon>
                    <RowText>{t}</RowText>
                    <Count $b={n === 1} $pr={1}>{n || 0}</Count>
                  </Row>
                ))}
              </Rows>
              <Thumb />
            </Tree>
          </Panel>
          <Panel>
            <PanelHead $h={82} $pl={12}>
              <TitleBlock $w={338}>
                <TitleIcon $w={43}><CodeSysIcon /></TitleIcon>
                コードシステム
              </TitleBlock>
              <Slot><UndoTag /></Slot>
              <Slot $ml={24}><FunnelDoc /></Slot>
              <Slot $ml={24}><NewTag /></Slot>
              <Slot $ml={22}><Magnifier /></Slot>
              <Slot $ml={24}><GearIcon /></Slot>
              <WinTools />
            </PanelHead>
            <Tree $l1={760} $l2={808}>
              <Rows $w={845} $pt={2}>
                <Row $root $h={38}>
                  <Chev><Chevron w={20} h={12} c="#a0a0a0" s={2.4} /></Chev>
                  <Dot $mr={5} />
                  <RowIcon $w={37}><CodeSysIcon /></RowIcon>
                  <RowText>コードシステム</RowText>
                  <Count $b>1</Count>
                </Row>
                <Row $sel>
                  <Dot $mr={3} />
                  <RowIcon $w={39}><CodeBlueDot /></RowIcon>
                  <RowText>不安を感じる</RowText>
                  <Count $pr={2}>1</Count>
                </Row>
                <Row $root $mt={3}>
                  <Chev />
                  <Dot $mr={5} />
                  <RowIcon $w={37}><SetIcon /></RowIcon>
                  <RowText>セット</RowText>
                  <Count $b>0</Count>
                </Row>
              </Rows>
            </Tree>
          </Panel>
        </LeftCol>

        <Panel $flex={1}>
          <Strip />
          <DocHeadWrap $h={72} $pl={17} $pb={14}>
            <TitleIcon $w={38}><DocPen /></TitleIcon>
            <DocTitle>文書ブラウザ: ヴィンセント <Lat>( <b>Vincent</b> )</Lat><i>(23 パラグラフ)</i></DocTitle>
            <Slot><ZoomIco /></Slot>
            <Slot $ml={1}><ZoomIco sign="+" /></Slot>
            <Slot><Zoom100 /></Slot>
            <ActiveSlot $ml={25}><PanelView /></ActiveSlot>
            <Slot $ml={23}><Printer /></Slot>
            <Slot><ExportDoc /></Slot>
            <Slot $ml={22}><Magnifier /></Slot>
            <Slot $ml={24}><Abc /></Slot>
            <Slot $ml={24}><GearIcon /></Slot>
            <WinTools />
          </DocHeadWrap>
          <ToolRow $h={62} $pl={18} $pb={5}>
            <Select>不安を感じる<SelectBtn><Chevron w={14} h={9} c="#fff" s={2.6} /></SelectBtn></Select>
            <TSlot $ml={14}><Ico w={20} h={34}><SegG x={10} /></Ico></TSlot>
            <TSlot $ml={4}><Ico w={34} h={36}><SegG x={8} /><Plus cx={24} cy={26} r={9} /></Ico></TSlot>
            <TSlot $ml={4}><Ico w={34} h={36}><SegG x={6} y0={8} /><path d="M16 0 V16" stroke={R} strokeWidth="3" strokeDasharray="4 2" /><Plus cx={24} cy={26} r={9} /></Ico></TSlot>
            <TSlot $ml={20}><Ico w={32} h={32}><rect x="1.5" y="1.5" width="29" height="29" stroke={N} strokeWidth="3" strokeDasharray="4 2.5" /><SegG x={16} y0={3} y1={29} cy={16} r={5.5} /></Ico></TSlot>
            <TSlot $ml={20}><Marker c={R} /></TSlot>
            <TSlot $ml={4}><Marker c="#4f86b8" /></TSlot>
            <TSlot $ml={4}><Marker c={GR} /></TSlot>
            <TSlot $ml={7}><Marker c="#f5b335" /></TSlot>
            <TSlot $ml={1}><Marker c="#a02ba0" /></TSlot>
            <TSlot $ml={20}>
              <Ico w={28} h={28}>
                <circle cx="14" cy="14" r="14" fill="#f5b335" />
                <circle cx="9" cy="10" r="2" fill="#5a4a20" /><circle cx="19" cy="10" r="2" fill="#5a4a20" />
                <path d="M7 16 Q14 24 21 16" stroke="#5a4a20" strokeWidth="1.6" />
              </Ico>
            </TSlot>
            <TSlot $ml={20}>
              <Ico w={20} h={34}>
                <path d="M4 7 a6 6 0 0 1 12 0" stroke={N} strokeWidth="3" />
                <SegG x={10} y0={8} y1={34} cy={18} r={6} />
              </Ico>
            </TSlot>
            <TSlot $ml={21}><LinkIco /></TSlot>
            <TSlot $ml={5}><LinkIco faded /></TSlot>
            <Toggle>
              <ToggleKnob>
                <Ico w={18} h={26}><polygon points="13,1 17,4 6,22 2,25 2,20" fill="#4f86b8" /></Ico>
              </ToggleKnob>
            </Toggle>
          </ToolRow>
          <DocBody>
            <CodeStrip>
              <GearBtn><GearIcon size={24} c="#666" /></GearBtn>
              <BracketLabel>不安を感じる</BracketLabel>
              <Bracket />
              <BracketDot />
            </CodeStrip>
            <NarrowCol />
            <ParaCol>
              <ParaCell $h={483} />
              <ParaCell $h={39} $shade />
              <ParaCell $h={52}>5</ParaCell>
              <ParaCell $h={4} $shade />
              <ParaCell $h={302}>6</ParaCell>
              <ParaCell $h={38} $shade />
              <ParaCell $h={52}>7</ParaCell>
              <ParaCell $h={4} $shade />
              <ParaCell $h={100}>8</ParaCell>
            </ParaCol>
            <TextArea>
              <DocText>
                {before.map(([h, t], i) => <Line key={i} $h={h}>{t}</Line>)}
                <Line $h={50}>デイトレーディングをするようになったんです。<Hl $h={50} $pl={8}>天職だと思ったんですが、妻に出</Hl></Line>
                <Line $h={51}><Hl $h={51}>会って、自分の将来を考えて、デイトレーディングはそんなに安定した仕事ではな</Hl></Line>
                <Line $h={56}><Hl $h={56} $pr={3} $mr={3}>いと考えました。だからもっと安定した仕事を探そうと感じました。</Hl>この9月から</Line>
                {after.map(([h, t], i) => <Line key={i} $h={h}>{t}</Line>)}
              </DocText>
              <HandleLine $x={746} $y={149} $h={76} />
              <HandleDot $x={737} $y={156} />
              <HandleLine $x={1064} $y={272} $h={77} />
              <HandleDot $x={1055} $y={321} />
            </TextArea>
            <ScrollCol><DocThumb /></ScrollCol>
            <RightMargin />
          </DocBody>
        </Panel>
      </Main>

      <Status>
        <StatusIcon><StDoc /></StatusIcon><StatusNum $ml={9}>0</StatusNum>
        <StatusIcon $ml={109}><StTag /></StatusIcon><StatusNum $ml={6}>0</StatusNum>
        <StatusIcon $ml={111}><StSegs /></StatusIcon><StatusNum $ml={6}>0</StatusNum>
        <StatusIcon $ml={109}><StSegDoc /></StatusIcon><StatusNum $ml={6}>0</StatusNum>
        <StatusIcon $ml={113}><StDocSet /></StatusIcon>
        <StatusIcon $ml={130}><StPerson /></StatusIcon>
        <StatusIcon $ml={130}><StImport /></StatusIcon>
        <StatusIcon $ml={134}><StQuery /></StatusIcon>
        <StatusText>単純なコーディング・クエリ (コードのOR組み合わせ)</StatusText>
      </Status>

      <Callout $x={953} $y={550} $w={1642} $h={287} />
      <Callout $x={70} $y={1007} $w={809} $h={75} />
    </Win>
  );
}
